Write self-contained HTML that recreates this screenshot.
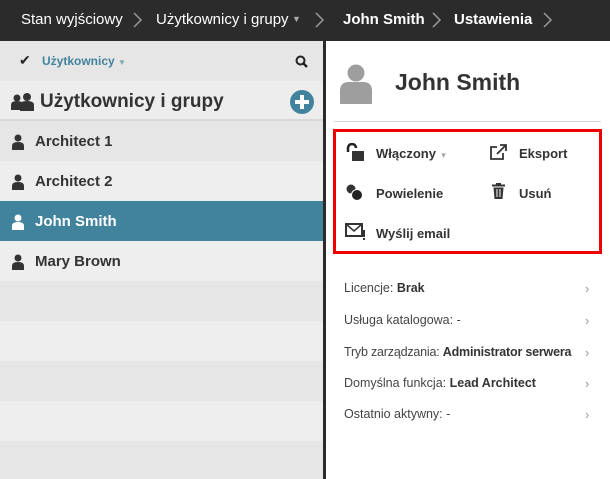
<!DOCTYPE html>
<html><head><meta charset="utf-8"><style>
*{margin:0;padding:0;box-sizing:border-box}
body{width:610px;height:479px;overflow:hidden;font-family:"Liberation Sans",sans-serif;background:#fff;position:relative;color:#333}
.top{position:absolute;left:0;top:0;width:610px;height:41px;background:#2b2b2b;color:#fff;font-size:15px}
.top span{position:absolute;top:11px;white-space:nowrap}
.top svg{position:absolute;top:12px}
.left{position:absolute;left:0;top:41px;width:323px;height:438px;background:repeating-linear-gradient(#e6e6e6 0 40px,#eeeeee 40px 80px)}
.border{position:absolute;left:323px;top:41px;width:3px;height:438px;background:#2b2b2b}
.tb{position:absolute;left:0;top:0;width:323px;height:40px;background:#e6e6e6}
.hd{position:absolute;left:0;top:40px;width:323px;height:40px;background:#ededed;border-bottom:2px solid #d8d8d8}
.row{position:absolute;left:0;width:323px;height:40px;font-weight:bold;font-size:15px;color:#333}
.row span{position:absolute;left:35px;top:12px}
.row svg{position:absolute;left:12px;top:13px}
.sel{background:#41839c;color:#fff}
.act{position:absolute;font-weight:bold;font-size:13px;color:#333}
.info{position:absolute;left:344px;font-size:12.5px;color:#444;white-space:nowrap}
.info b{color:#333}
.ich{position:absolute;left:585px;color:#999;font-size:13px}
</style></head><body>
<div class="top">
<span style="left:21px">Stan wyjściowy</span>
<svg style="left:133px" width="10" height="16" viewBox="0 0 10 16"><path d="M1 1l7 7-7 7" fill="none" stroke="#999" stroke-width="1.5"/></svg>
<span style="left:156px">Użytkownicy i grupy</span>
<span style="left:292px;top:14px;color:#aaa;font-size:9px">▼</span>
<svg style="left:315px" width="10" height="16" viewBox="0 0 10 16"><path d="M1 1l7 7-7 7" fill="none" stroke="#999" stroke-width="1.5"/></svg>
<span style="left:343px;font-weight:bold">John Smith</span>
<svg style="left:432px" width="10" height="16" viewBox="0 0 10 16"><path d="M1 1l7 7-7 7" fill="none" stroke="#999" stroke-width="1.5"/></svg>
<span style="left:454px;font-weight:bold">Ustawienia</span>
<svg style="left:543px" width="10" height="16" viewBox="0 0 10 16"><path d="M1 1l7 7-7 7" fill="none" stroke="#999" stroke-width="1.5"/></svg>
</div>
<div class="left">
<div class="tb">
<span style="position:absolute;left:19px;top:11px;font-size:14px;color:#222">✔</span>
<span style="position:absolute;left:42px;top:13px;font-size:12px;font-weight:bold;color:#41839c">Użytkownicy <span style="font-size:8px;color:#7aa">▼</span></span>
<svg style="position:absolute;left:295px;top:14px" width="13" height="13" viewBox="0 0 13 13"><circle cx="5.5" cy="5.5" r="4" fill="none" stroke="#222" stroke-width="2"/><path d="M8.5 8.5L12 12" stroke="#222" stroke-width="2.5"/></svg>
</div>
<div class="hd">
<svg style="position:absolute;left:11px;top:12px" width="23" height="18" viewBox="0 0 23 18"><circle cx="6" cy="5" r="3.5" fill="#333"/><path d="M0 17v-5q0-4 6-4t6 4v5z" fill="#333"/><circle cx="16" cy="4" r="4" fill="#333"/><path d="M9 18v-6q0-4 7-4t7 4v6z" fill="#333"/></svg>
<span style="position:absolute;left:40px;top:10px;font-size:19px;font-weight:bold;color:#333">Użytkownicy i grupy</span>
<svg style="position:absolute;left:290px;top:9px" width="24" height="24" viewBox="0 0 24 24"><circle cx="12" cy="12" r="12" fill="#41839c"/><path d="M12 5v14M5 12h14" stroke="#fff" stroke-width="4"/></svg>
</div>
</div>
<div class="row" style="top:121px;background:#e6e6e6"><svg width="12" height="16" viewBox="0 0 12 16"><circle cx="6" cy="4" r="3.5" fill="#333"/><path d="M0 16v-4q0-4 6-4t6 4v4z" fill="#333"/></svg><span>Architect 1</span></div>
<div class="row" style="top:161px;background:#eee"><svg width="12" height="16" viewBox="0 0 12 16"><circle cx="6" cy="4" r="3.5" fill="#333"/><path d="M0 16v-4q0-4 6-4t6 4v4z" fill="#333"/></svg><span>Architect 2</span></div>
<div class="row sel" style="top:201px"><svg width="12" height="16" viewBox="0 0 12 16"><circle cx="6" cy="4" r="3.5" fill="#fff"/><path d="M0 16v-4q0-4 6-4t6 4v4z" fill="#fff"/></svg><span>John Smith</span></div>
<div class="row" style="top:241px;background:#eee"><svg width="12" height="16" viewBox="0 0 12 16"><circle cx="6" cy="4" r="3.5" fill="#333"/><path d="M0 16v-4q0-4 6-4t6 4v4z" fill="#333"/></svg><span>Mary Brown</span></div>
<div class="border"></div>

<svg style="position:absolute;left:340px;top:64px" width="32" height="40" viewBox="0 0 32 40"><circle cx="16" cy="9" r="8.5" fill="#9e9e9e"/><path d="M0 40V27q0-9 9-9h14q9 0 9 9v13z" fill="#9e9e9e"/></svg>
<div style="position:absolute;left:395px;top:69px;font-size:23px;font-weight:bold;color:#333">John Smith</div>
<div style="position:absolute;left:334px;top:121px;width:267px;height:1px;background:#d8d8d8"></div>
<div style="position:absolute;left:333px;top:129px;width:269px;height:125px;border:3px solid #ee0000"></div>

<svg style="position:absolute;left:345px;top:143px" width="20" height="18" viewBox="0 0 20 18"><path d="M3 9V5a4 4 0 0 1 8 0" fill="none" stroke="#222" stroke-width="2.5"/><rect x="7" y="8" width="12" height="10" fill="#333"/></svg>
<div class="act" style="left:376px;top:146px">Włączony <span style="font-size:8px;color:#aaa">▼</span></div>
<svg style="position:absolute;left:490px;top:144px" width="17" height="16" viewBox="0 0 17 16"><path d="M7 3H1v12h12V9" fill="none" stroke="#333" stroke-width="1.8"/><path d="M7 10L15 2M10 1h6v6" fill="none" stroke="#333" stroke-width="1.8"/></svg>
<div class="act" style="left:519px;top:146px">Eksport</div>
<svg style="position:absolute;left:346px;top:184px" width="17" height="17" viewBox="0 0 17 17"><circle cx="5" cy="5" r="4.5" fill="#333"/><circle cx="11" cy="11" r="5.5" fill="#222" stroke="#fff" stroke-width="1"/></svg>
<div class="act" style="left:376px;top:186px">Powielenie</div>
<svg style="position:absolute;left:492px;top:183px" width="13" height="16" viewBox="0 0 13 16"><rect x="0" y="1.5" width="13" height="2" fill="#333"/><rect x="4" y="0" width="5" height="2" fill="#333"/><path d="M1.5 4.5h10l-1 11.5h-8z" fill="#333"/><path d="M5 6v8M8 6v8" stroke="#fff" stroke-width="1"/></svg>
<div class="act" style="left:519px;top:186px">Usuń</div>
<svg style="position:absolute;left:345px;top:223px" width="21" height="18" viewBox="0 0 21 18"><rect x="1" y="1" width="16" height="12" fill="none" stroke="#333" stroke-width="2"/><path d="M1 1l8 7 8-7" fill="none" stroke="#333" stroke-width="1.5"/><rect x="18" y="7" width="2" height="7" fill="#333"/><rect x="18" y="15" width="2" height="2" fill="#333"/></svg>
<div class="act" style="left:376px;top:226px">Wyślij email</div>

<div class="info" style="top:281px">Licencje: <b>Brak</b></div><div class="ich" style="top:281px">›</div>
<div class="info" style="top:313px">Usługa katalogowa: -</div><div class="ich" style="top:313px">›</div>
<div class="info" style="top:345px;letter-spacing:-0.2px">Tryb zarządzania: <b>Administrator serwera</b></div><div class="ich" style="top:345px">›</div>
<div class="info" style="top:376px">Domyślna funkcja: <b>Lead Architect</b></div><div class="ich" style="top:376px">›</div>
<div class="info" style="top:407px">Ostatnio aktywny: -</div><div class="ich" style="top:407px">›</div>
</body></html>
